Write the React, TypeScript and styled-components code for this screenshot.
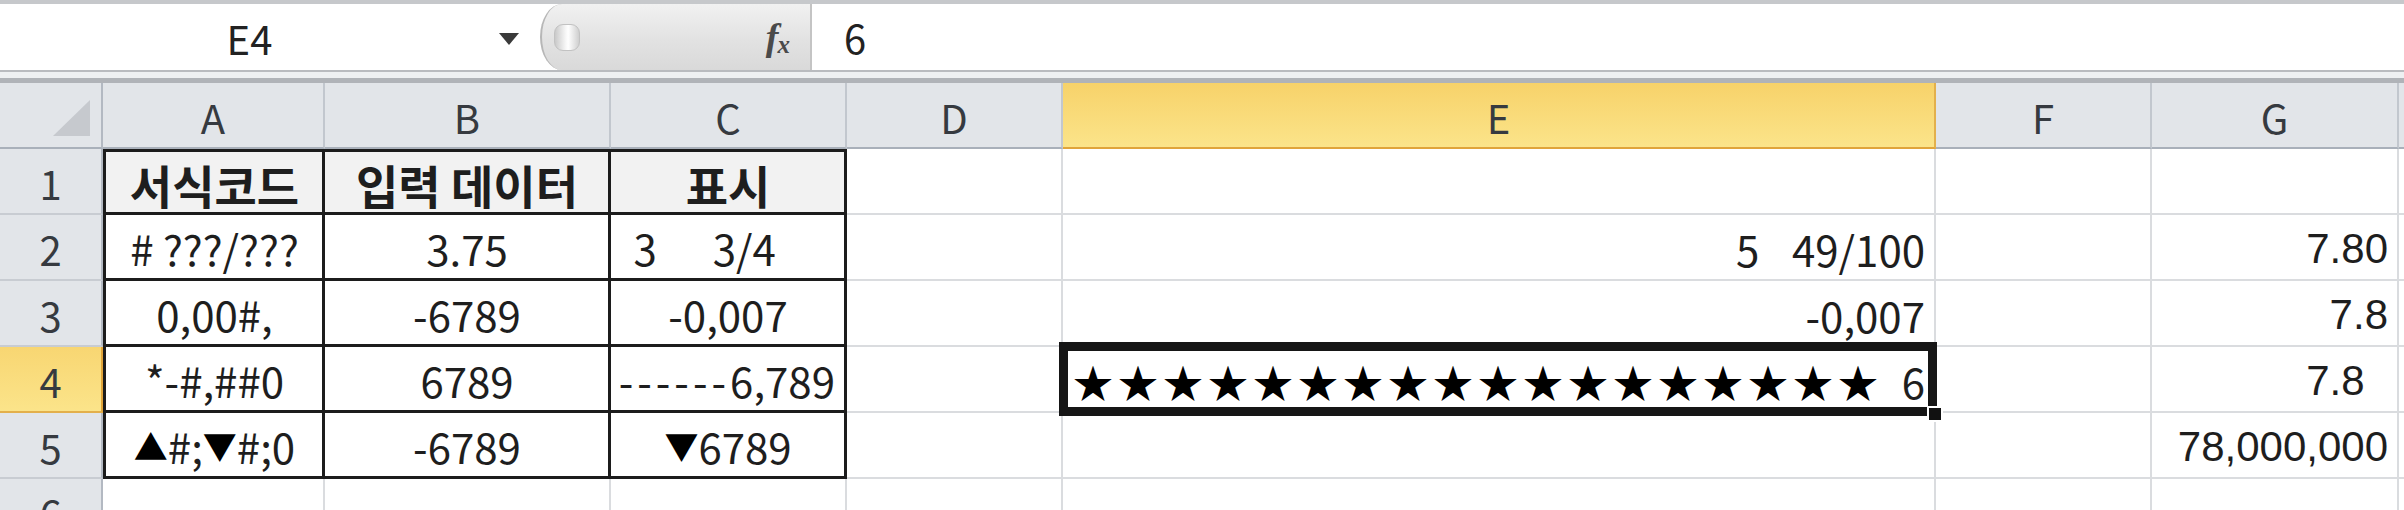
import React from 'react';
import styled, { createGlobalStyle, css } from 'styled-components';

const GlobalStyle = createGlobalStyle`
  html, body { margin: 0; padding: 0; background: #ffffff; }
  body {
    width: 2404px;
    height: 510px;
    overflow: hidden;
    font-family: "Noto Sans CJK KR", "Noto Sans", sans-serif;
    color: #222;
  }
  * { box-sizing: border-box; }
`;

const Window = styled.div`
  width: 2404px;
  height: 510px;
  overflow: hidden;
  display: flex;
  flex-direction: column;
  background: #fff;
`;

/* ---------- formula bar ---------- */

const FormulaBar = styled.div`
  flex: none;
  display: flex;
  flex-direction: column;
`;

const BarRow = styled.div`
  height: 70px;
  display: flex;
  border-top: 4px solid #c6c8cb;
  background: #fff;
`;

const NameBox = styled.div`
  width: 540px;
  display: flex;
  align-items: center;
  padding-right: 21px;
`;

const NameText = styled.div`
  flex: 1;
  text-align: center;
  font-size: 40px;
  line-height: 1;
  color: #222;
  padding-top: 2px;
`;

const DropArrow = styled.div`
  width: 0;
  height: 0;
  border-left: 10px solid transparent;
  border-right: 10px solid transparent;
  border-top: 12px solid #3a3a3a;
  margin-top: 4px;
`;

const FxPanel = styled.div`
  width: 272px;
  display: flex;
  align-items: center;
  justify-content: space-between;
  padding: 0 20px 0 12px;
  background: linear-gradient(#f1f1f1, #e2e2e2 55%, #d9d9d9);
  border-left: 2px solid #b7b7b7;
  border-right: 2px solid #c4c4c4;
  border-radius: 22px 0 0 22px / 33px 0 0 33px;
`;

const Grip = styled.div`
  width: 26px;
  height: 27px;
  border-radius: 9px;
  background: linear-gradient(90deg, #c9c9c9, #f7f7f7 45%, #ffffff 55%, #cfcfcf);
  border: 1px solid #c2c2c2;
`;

const FxLabel = styled.div`
  font-family: "Liberation Serif", "DejaVu Serif", serif;
  font-style: italic;
  font-weight: bold;
  color: #4a4a4a;
  font-size: 38px;
  line-height: 1;
  display: flex;
  align-items: baseline;
`;

const FxSub = styled.span`
  font-size: 25px;
  margin-left: -1px;
  position: relative;
  top: 3px;
`;

const FormulaInput = styled.div`
  flex: 1;
  display: flex;
  align-items: center;
  padding-left: 32px;
  font-size: 40px;
  line-height: 1;
  color: #222;
`;

const Splitter = styled.div`
  height: 13px;
  border-top: 2px solid #b9bbbf;
  border-bottom: 5px solid #b0b3b8;
  background: #eef0f2;
`;

/* ---------- sheet ---------- */

const Sheet = styled.div`
  display: grid;
  grid-template-columns: 103px 222px 286px 236px 216px 873px 216px 247px 1fr;
  grid-auto-rows: 66px;
  flex: none;
`;

const headBase = css`
  display: flex;
  align-items: center;
  justify-content: center;
  font-size: 40px;
  line-height: 1;
  color: #363a40;
  padding-top: 3px;
`;

const Corner = styled.div`
  ${headBase};
  background: #e2e5e9;
  border-right: 2px solid #b3b9c2;
  border-bottom: 2px solid #a9b0ba;
  justify-content: flex-end;
  align-items: flex-end;
  padding: 0 11px 11px 0;
`;

const CornerTriangle = styled.div`
  width: 0;
  height: 0;
  border-left: 37px solid transparent;
  border-bottom: 36px solid #c6c9ce;
`;

const ColHead = styled.div<{ $sel?: boolean }>`
  ${headBase};
  background: ${(p) => (p.$sel ? 'linear-gradient(#f7d26a, #fbe48a)' : '#e2e5e9')};
  border-right: 2px solid ${(p) => (p.$sel ? '#e3b04c' : '#c2c7ce')};
  border-bottom: 2px solid ${(p) => (p.$sel ? '#e0a43a' : '#a9b0ba')};
`;

const RowHead = styled.div<{ $sel?: boolean }>`
  ${headBase};
  background: ${(p) => (p.$sel ? 'linear-gradient(#f8d672, #fbe48a)' : '#e2e5e9')};
  border-right: 2px solid ${(p) => (p.$sel ? '#e0a43a' : '#b3b9c2')};
  border-bottom: 2px solid ${(p) => (p.$sel ? '#e3b04c' : '#c8ccd2')};
`;

type Align = 'left' | 'center' | 'right';

const Cell = styled.div<{
  $align?: Align;
  $bold?: boolean;
  $fill?: string;
  $table?: boolean;
  $first?: boolean;
  $top?: boolean;
  $arial?: boolean;
  $active?: boolean;
}>`
  position: relative;
  display: flex;
  align-items: center;
  justify-content: ${(p) =>
    p.$align === 'left' ? 'flex-start' : p.$align === 'right' ? 'flex-end' : 'center'};
  padding: 3px 9px 0 10px;
  background: ${(p) => p.$fill || '#fff'};
  border-right: 2px solid #dadcdf;
  border-bottom: 2px solid #dadcdf;
  font-family: ${(p) =>
    p.$arial ? '"Liberation Sans", Arial, sans-serif' : '"Noto Sans CJK KR", "Noto Sans", sans-serif'};
  font-size: ${(p) => (p.$bold ? '46px' : '42px')};
  font-weight: ${(p) => (p.$bold ? 700 : 400)};
  line-height: 1;
  white-space: pre;
  color: #1e1e1e;
  ${(p) =>
    p.$table &&
    css`
      border-right: 3px solid #1c1c1c;
      border-bottom: 3px solid #1c1c1c;
    `}
  ${(p) =>
    p.$first &&
    css`
      border-left: 3px solid #1c1c1c;
    `}
  ${(p) =>
    p.$top &&
    css`
      border-top: 3px solid #1c1c1c;
    `}
  ${(p) =>
    p.$active &&
    css`
      z-index: 2;
      justify-content: space-between;
    `}
`;

const Selection = styled.div`
  position: absolute;
  top: -5px;
  left: -4px;
  right: -3px;
  bottom: -5px;
  border: 9px solid #161616;
  pointer-events: none;
`;

const FillHandle = styled.div`
  position: absolute;
  right: -15px;
  bottom: -15px;
  width: 16px;
  height: 16px;
  background: #111;
  border: 2px solid #fff;
`;

const Stars = styled.span`
  letter-spacing: 5px;
  font-size: 40px;
  color: #000;
`;

const Dashes = styled.span`
  letter-spacing: 4px;
`;

const Tri = styled.span`
  font-size: 34px;
  color: #000;
`;

const FS = '\u2007';

type CellDef = {
  t?: React.ReactNode;
  align?: Align;
  bold?: boolean;
  arial?: boolean;
};

const COLS = ['A', 'B', 'C', 'D', 'E', 'F', 'G'];

const rows: CellDef[][] = [
  [
    { t: '서식코드', bold: true },
    { t: '입력 데이터', bold: true },
    { t: '표시', bold: true },
    {},
    {},
    {},
    {},
  ],
  [
    { t: '# ???/???' },
    { t: '3.75' },
    { t: `3 ${FS}${FS}3/4${FS}${FS}` },
    {},
    { t: `5 ${FS}49/100`, align: 'right' },
    {},
    { t: '7.80', align: 'right', arial: true },
  ],
  [
    { t: '0,00#,' },
    { t: '-6789' },
    { t: '-0,007' },
    {},
    { t: '-0,007', align: 'right' },
    {},
    { t: '7.8', align: 'right', arial: true },
  ],
  [
    { t: '*-#,##0' },
    { t: '6789' },
    {
      t: (
        <>
          <Dashes>------</Dashes>6,789
        </>
      ),
      align: 'right',
    },
    {},
    { t: 'ACTIVE' },
    {},
    { t: `7.8${FS}`, align: 'right', arial: true },
  ],
  [
    {
      t: (
        <>
          <Tri>▲</Tri>#;<Tri>▼</Tri>#;0
        </>
      ),
    },
    { t: '-6789' },
    {
      t: (
        <>
          <Tri>▼</Tri>6789
        </>
      ),
    },
    {},
    {},
    {},
    { t: '78,000,000', align: 'right', arial: true },
  ],
  [{}, {}, {}, {}, {}, {}, {}],
];

export default function App() {
  return (
    <Window>
      <GlobalStyle />
      <FormulaBar>
        <BarRow>
          <NameBox>
            <NameText>E4</NameText>
            <DropArrow />
          </NameBox>
          <FxPanel>
            <Grip />
            <FxLabel>
              f<FxSub>x</FxSub>
            </FxLabel>
          </FxPanel>
          <FormulaInput>6</FormulaInput>
        </BarRow>
        <Splitter />
      </FormulaBar>

      <Sheet>
        <Corner>
          <CornerTriangle />
        </Corner>
        {COLS.map((c) => (
          <ColHead key={c} $sel={c === 'E'}>
            {c}
          </ColHead>
        ))}
        <ColHead />

        {rows.map((r, ri) => {
          const rowNo = ri + 1;
          return (
            <React.Fragment key={rowNo}>
              <RowHead $sel={rowNo === 4}>{rowNo}</RowHead>
              {r.map((cell, ci) => {
                const inTable = ci < 3 && rowNo <= 5;
                const isActive = ci === 4 && rowNo === 4;
                if (isActive) {
                  return (
                    <Cell key={ci} $active>
                      <Stars>{'★'.repeat(18)}</Stars>
                      <span>6</span>
                      <Selection>
                        <FillHandle />
                      </Selection>
                    </Cell>
                  );
                }
                return (
                  <Cell
                    key={ci}
                    $align={cell.align || 'center'}
                    $bold={cell.bold}
                    $arial={cell.arial}
                    $table={inTable}
                    $first={inTable && ci === 0}
                    $top={inTable && rowNo === 1}
                    $fill={inTable && rowNo === 1 ? '#f2f2f2' : undefined}
                  >
                    {cell.t}
                  </Cell>
                );
              })}
              <Cell />
            </React.Fragment>
          );
        })}
      </Sheet>
    </Window>
  );
}
